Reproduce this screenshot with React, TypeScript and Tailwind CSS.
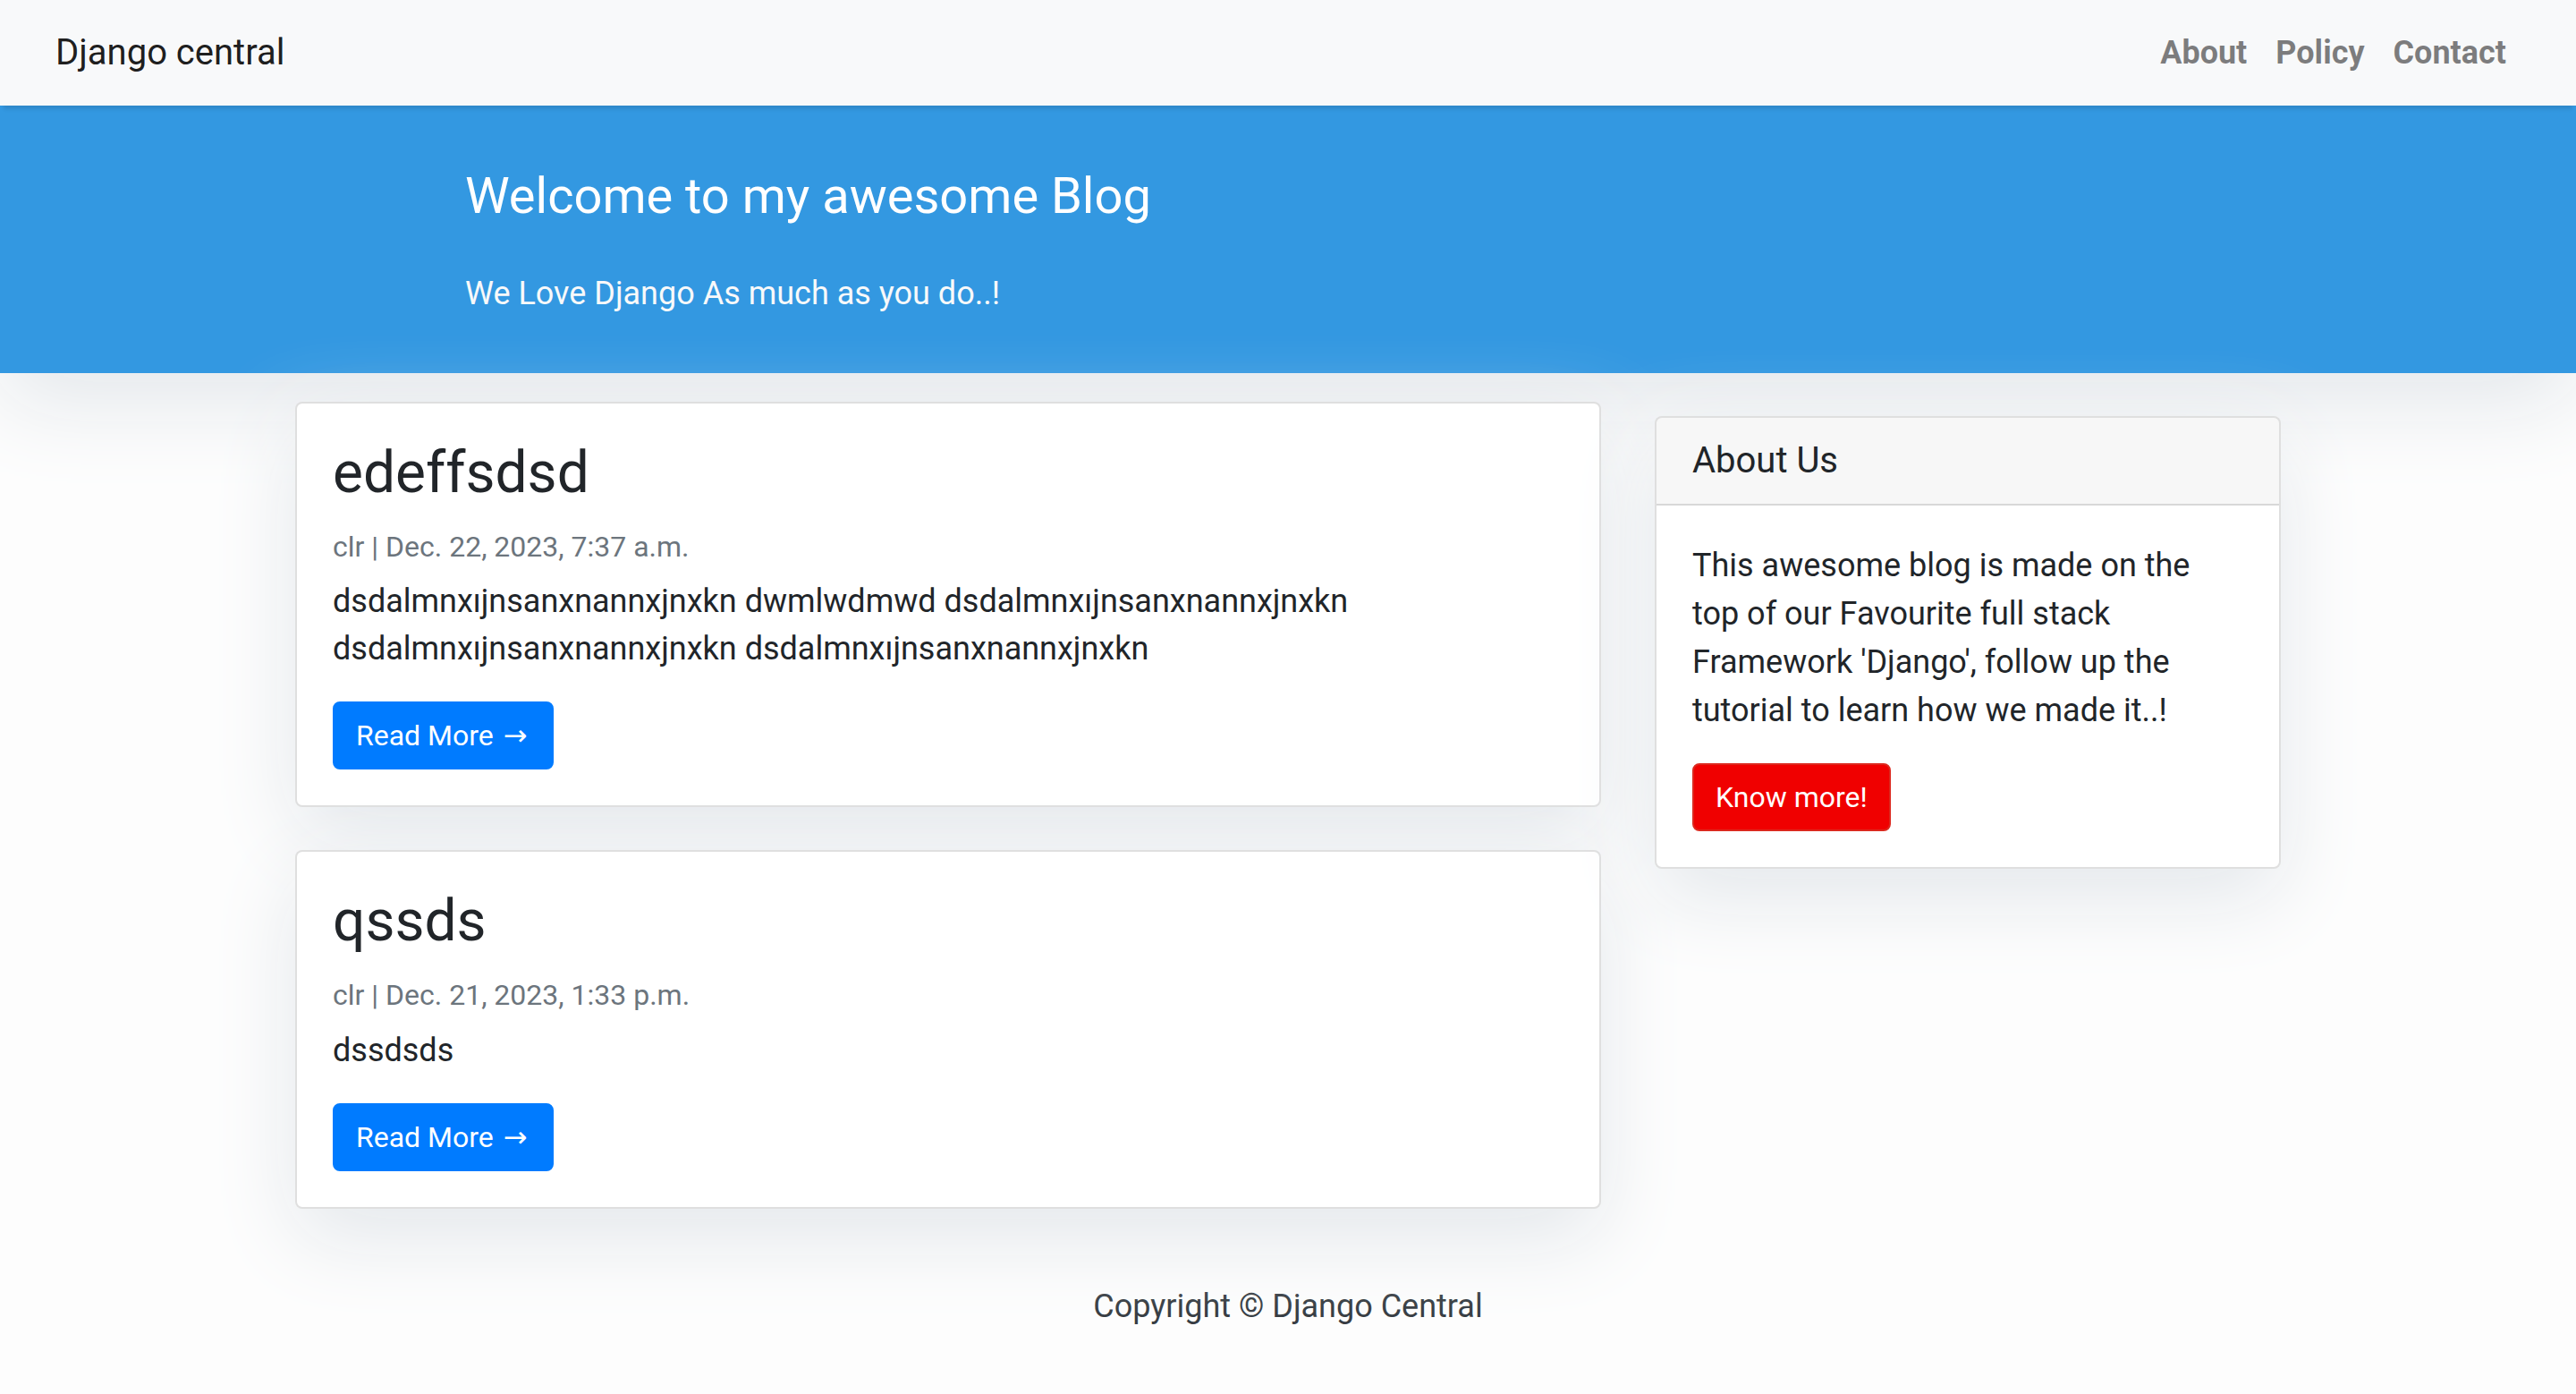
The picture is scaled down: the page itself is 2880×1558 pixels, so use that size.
import React from "react";

const WORD = "dsdalmnxıjnsanxnannxjnxkn";

const posts = [
  {
    title: "edeffsdsd",
    meta: "clr | Dec. 22, 2023, 7:37 a.m.",
    content: `${WORD} dwmlwdmwd ${WORD} ${WORD} ${WORD}`,
  },
  {
    title: "qssds",
    meta: "clr | Dec. 21, 2023, 1:33 p.m.",
    content: "dssdsds",
  },
];

function Arrow() {
  return (
    <span className="ml-[3px] mr-[3px]" style={{ fontFamily: "'DejaVu Sans', sans-serif" }}>
      &rarr;
    </span>
  );
}

function PostCard({ title, meta, content }: { title: string; meta: string; content: string }) {
  return (
    <div className="relative mb-[48px] rounded-[8px] border-2 border-black/[.125] bg-white shadow-[0_32px_96px_#E3E7EB]">
      <div className="p-[40px]">
        <h2 className="mb-[24px] text-[64px] leading-[76.8px] font-normal text-[#212529]">{title}</h2>
        <p className="mb-[16px] text-[32px] leading-[38.4px] font-normal text-[#6c757d]">{meta}</p>
        <p className="mb-[32px] text-[36px] leading-[53px] text-[#212529]">{content}</p>
        <a className="inline-block rounded-[8px] border-2 border-[#007bff] bg-[#007bff] px-[24px] py-[12px] text-[32px] leading-[48px] text-white">
          Read More <Arrow />
        </a>
      </div>
    </div>
  );
}

export default function App() {
  return (
    <div
      className="min-h-screen bg-[#fdfdfd] text-[#212529]"
      style={{ fontFamily: "Roboto, 'Liberation Sans', sans-serif" }}
    >
      <nav className="relative z-10 flex h-[118px] items-center justify-between bg-[#f8f9fa] px-[62px] shadow-[0_8px_4px_-4px_rgba(0,0,0,0.1)]">
        <a className="py-[10px] text-[40px] leading-[60px] text-black/90">Django central</a>
        <ul className="flex">
          {["About", "Policy", "Contact"].map((l) => (
            <li key={l}>
              <a className="block px-[16px] text-[36px] leading-[54px] font-bold text-black/50">{l}</a>
            </li>
          ))}
        </ul>
      </nav>

      <header className="bg-[#3398E1] pt-[20px] pb-[30px] shadow-[0_32px_96px_#E3E7EB]">
        <div className="mx-auto w-[1840px]">
          <h3 className="mt-[48px] mb-[48px] text-[56px] leading-[67.2px] font-normal text-white">
            Welcome to my awesome Blog
          </h3>
          <p className="mb-[32px] text-[36px] leading-[54px] text-[#f8f9fa]">We Love Django As much as you do..!&nbsp;</p>
        </div>
      </header>

      <div className="mx-auto flex w-[2220px] items-start gap-[60px]">
        <div className="mt-[32px] w-[1460px] shrink-0">
          {posts.map((p) => (
            <PostCard key={p.title} {...p} />
          ))}
        </div>
        <div className="w-[700px] shrink-0">
          <div className="relative mt-[48px] rounded-[8px] border-2 border-black/[.125] bg-white shadow-[0_32px_96px_#E3E7EB]">
            <h5 className="rounded-t-[6px] border-b-2 border-black/[.125] bg-black/[.03] px-[40px] py-[24px] text-[40px] leading-[48px] font-normal text-[#212529]">
              About Us
            </h5>
            <div className="p-[40px]">
              <p className="mb-[32px] text-[36px] leading-[54px] text-[#212529]">
                This awesome blog is made on the top of our Favourite full stack Framework 'Django', follow up the
                tutorial to learn how we made it..!
              </p>
              <a className="inline-block rounded-[8px] border-2 border-[#dc281e] bg-[#f00000] px-[24px] py-[12px] text-[32px] leading-[48px] text-white">
                Know more!
              </a>
            </div>
          </div>
        </div>
      </div>

      <footer className="pt-[34px] pb-[32px]">
        <p className="m-0 text-center text-[36px] leading-[54px] text-[#343a40]">Copyright &copy; Django Central</p>
      </footer>
    </div>
  );
}
